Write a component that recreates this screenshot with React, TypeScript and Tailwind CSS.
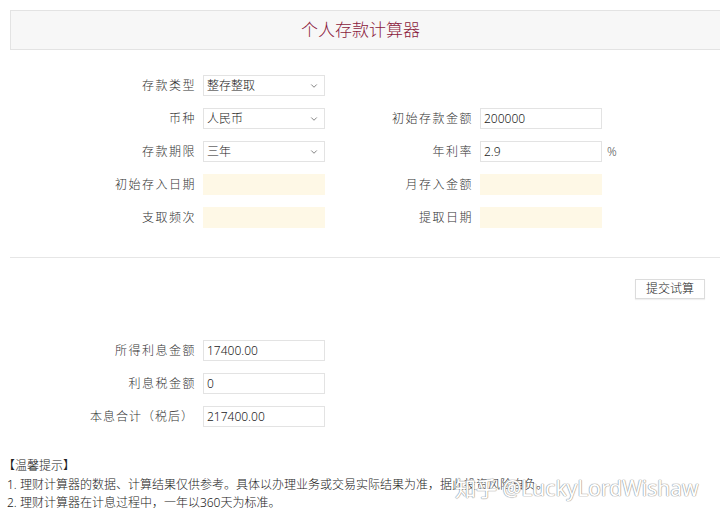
import { ChevronDown } from "lucide-react";

const font = { fontFamily: '"Noto Sans", "Noto Sans CJK SC", sans-serif' };

function Label({ text, width }: { text: string; width: string }) {
  return (
    <div className={`${width} shrink-0 text-right text-[12px] font-light tracking-[1.5px] text-[#333]`}>
      {text}
    </div>
  );
}

function Select({ value }: { value: string }) {
  return (
    <div className="flex h-[21px] w-[122px] items-center justify-between border border-[#e3e3e3] bg-white pl-[3px] pr-[5px] text-[12px] font-light text-[#222]">
      <span>{value}</span>
      <ChevronDown size={10} strokeWidth={1.75} className="text-[#555]" />
    </div>
  );
}

function Input({ value, cream }: { value?: string; cream?: boolean }) {
  return (
    <div
      className={`flex h-[21px] w-[122px] items-center pl-[3px] text-[12px] font-light text-[#222] ${
        cream ? "bg-[#fef8e6]" : "border border-[#e3e3e3] bg-white"
      }`}
    >
      {value}
    </div>
  );
}

export default function App() {
  return (
    <div className="relative w-[720px] bg-white pt-[10px]" style={font}>
      {/* 标题 */}
      <div className="ml-[10px] flex h-[40px] items-center justify-center border-y border-l border-[#e3e3e3] bg-[#f7f7f7] pr-[10px]">
        <h1 className="text-[17px] font-light text-[#8b1a3c]">个人存款计算器</h1>
      </div>

      {/* 表单 */}
      <div className="flex flex-col gap-[12px] pt-[25px]">
        <div className="flex items-center gap-[7px]">
          <Label text="存款类型" width="w-[196px]" />
          <Select value="整存整取" />
        </div>
        <div className="flex items-center">
          <div className="flex items-center gap-[7px]">
            <Label text="币种" width="w-[196px]" />
            <Select value="人民币" />
          </div>
          <div className="flex items-center gap-[7px]">
            <Label text="初始存款金额" width="w-[148px]" />
            <Input value="200000" />
          </div>
        </div>
        <div className="flex items-center">
          <div className="flex items-center gap-[7px]">
            <Label text="存款期限" width="w-[196px]" />
            <Select value="三年" />
          </div>
          <div className="flex items-center gap-[7px]">
            <Label text="年利率" width="w-[148px]" />
            <Input value="2.9" />
            <span className="ml-[-2px] text-[12px] font-light text-[#555]">%</span>
          </div>
        </div>
        <div className="flex items-center">
          <div className="flex items-center gap-[7px]">
            <Label text="初始存入日期" width="w-[196px]" />
            <Input cream />
          </div>
          <div className="flex items-center gap-[7px]">
            <Label text="月存入金额" width="w-[148px]" />
            <Input cream />
          </div>
        </div>
        <div className="flex items-center">
          <div className="flex items-center gap-[7px]">
            <Label text="支取频次" width="w-[196px]" />
            <Input cream />
          </div>
          <div className="flex items-center gap-[7px]">
            <Label text="提取日期" width="w-[148px]" />
            <Input cream />
          </div>
        </div>
      </div>

      <div className="ml-[10px] mt-[29px] h-px bg-[#e6e6e6]" />

      <div className="flex justify-end pr-[15px] pt-[21px]">
        <button className="h-[20px] w-[70px] border border-[#dcdcdc] bg-white text-[12px] font-light text-[#222] shadow-[0_1px_1px_rgba(0,0,0,0.06)]">
          提交试算
        </button>
      </div>

      {/* 结果 */}
      <div className="flex flex-col gap-[12px] pt-[41px]">
        <div className="flex items-center gap-[7px]">
          <Label text="所得利息金额" width="w-[196px]" />
          <Input value="17400.00" />
        </div>
        <div className="flex items-center gap-[7px]">
          <Label text="利息税金额" width="w-[196px]" />
          <Input value="0" />
        </div>
        <div className="flex items-center gap-[7px]">
          <div className="w-[196px] shrink-0 pr-[2px] text-right text-[12px] font-light tracking-[1px] text-[#333]">
            本息合计（税后）
          </div>
          <Input value="217400.00" />
        </div>
      </div>

      {/* 温馨提示 */}
      <div className="pb-[6px] pl-[7px] pt-[30px] text-[12px] font-light leading-[18.5px] text-[#222]">
        <p className="-ml-[4px]">【温馨提示】</p>
        <p>1. 理财计算器的数据、计算结果仅供参考。具体以办理业务或交易实际结果为准，据此投资风险自负。</p>
        <p>2. 理财计算器在计息过程中，一年以360天为标准。</p>
      </div>

      {/* 水印 */}
      <div className="pointer-events-none absolute left-[455px] top-[473px] text-[21px] text-white [text-shadow:0_0_1px_#999,0_0_1px_#999,0_0_1px_#999]">
        知乎 @LuckyLordWishaw
      </div>
    </div>
  );
}
